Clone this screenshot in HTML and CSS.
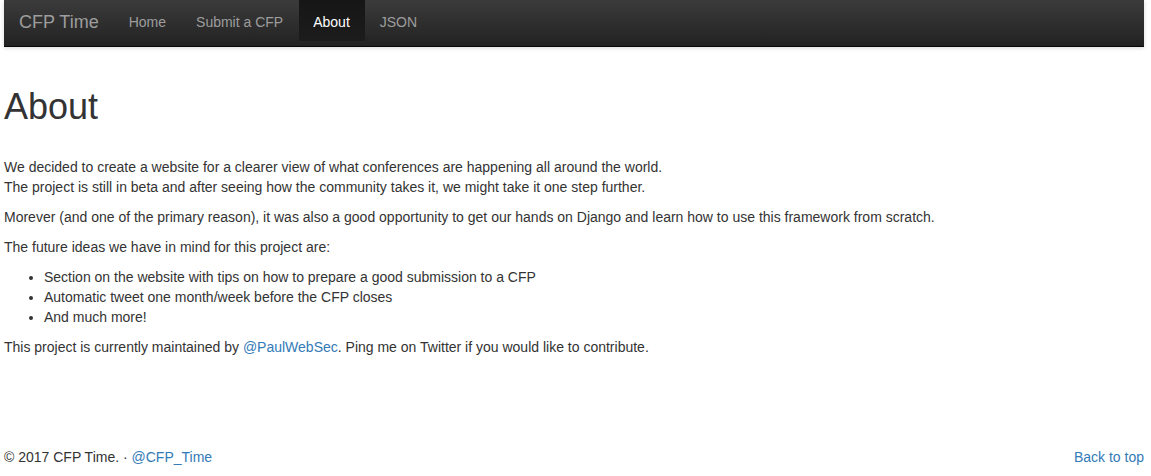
FILE: index.html
```html
<!DOCTYPE html>
<html>
<head>
<meta charset="utf-8">
<link rel="stylesheet" href="styles.css">
</head>
<body>
<div class="container">
  <nav class="navbar">
    <a class="brand" href="#">CFP Time</a>
    <ul class="nav">
      <li><a href="#">Home</a></li>
      <li><a href="#">Submit a CFP</a></li>
      <li class="active"><a href="#">About</a></li>
      <li><a href="#">JSON</a></li>
    </ul>
  </nav>
  <main class="content">
    <h1>About</h1>
    <p>We decided to create a website for a clearer view of what conferences are happening all around the world.<br>The project is still in beta and after seeing how the community takes it, we might take it one step further.</p>
    <p>Morever (and one of the primary reason), it was also a good opportunity to get our hands on Django and learn how to use this framework from scratch.</p>
    <p>The future ideas we have in mind for this project are:</p>
    <ul class="ideas">
      <li>Section on the website with tips on how to prepare a good submission to a CFP</li>
      <li>Automatic tweet one month/week before the CFP closes</li>
      <li>And much more!</li>
    </ul>
    <p>This project is currently maintained by <a href="#">@PaulWebSec</a>. Ping me on Twitter if you would like to contribute.</p>
  </main>
  <footer class="footer">
    <span>© 2017 CFP Time. · <a href="#">@CFP_Time</a></span>
    <a href="#">Back to top</a>
  </footer>
</div>
</body>
</html>
```
FILE: styles.css
```css
html, body {
  margin: 0;
  padding: 0;
  background: #fff;
}
body {
  font-family: "Liberation Sans", Arial, sans-serif;
  font-size: 14px;
  line-height: 20px;
  color: #333;
}
a {
  color: #337ab7;
  text-decoration: none;
}
.container {
  width: 1140px;
  padding-left: 4px;
}
.navbar {
  display: flex;
  align-items: flex-start;
  height: 46px;
  background: linear-gradient(to bottom, #3b3b3b 0%, #222 100%);
  border-bottom: 1px solid #080808;
  box-shadow: 0 1px 4px rgba(0,0,0,0.15);
}
.brand {
  font-size: 18px;
  line-height: 20px;
  color: #9d9d9d;
  padding: 12px 15px 0 15px;
}
.nav {
  display: flex;
  list-style: none;
  margin: 0;
  padding: 0;
}
.nav li a {
  display: block;
  padding: 12px 15px 9px;
  color: #9d9d9d;
  line-height: 20px;
}
.nav li.active a {
  color: #fff;
  margin-left: 1px;
  padding-left: 14px;
  background: linear-gradient(to bottom, #161616 0%, #1c1c1c 100%);
}
.content h1 {
  font-size: 36px;
  font-weight: 500;
  line-height: 40px;
  margin: 40px 0 30px;
}
.content p {
  margin: 0 0 10px;
}
.ideas {
  margin: 0 0 10px;
  padding-left: 40px;
}
.footer {
  display: flex;
  justify-content: space-between;
  margin-top: 90px;
}
```
